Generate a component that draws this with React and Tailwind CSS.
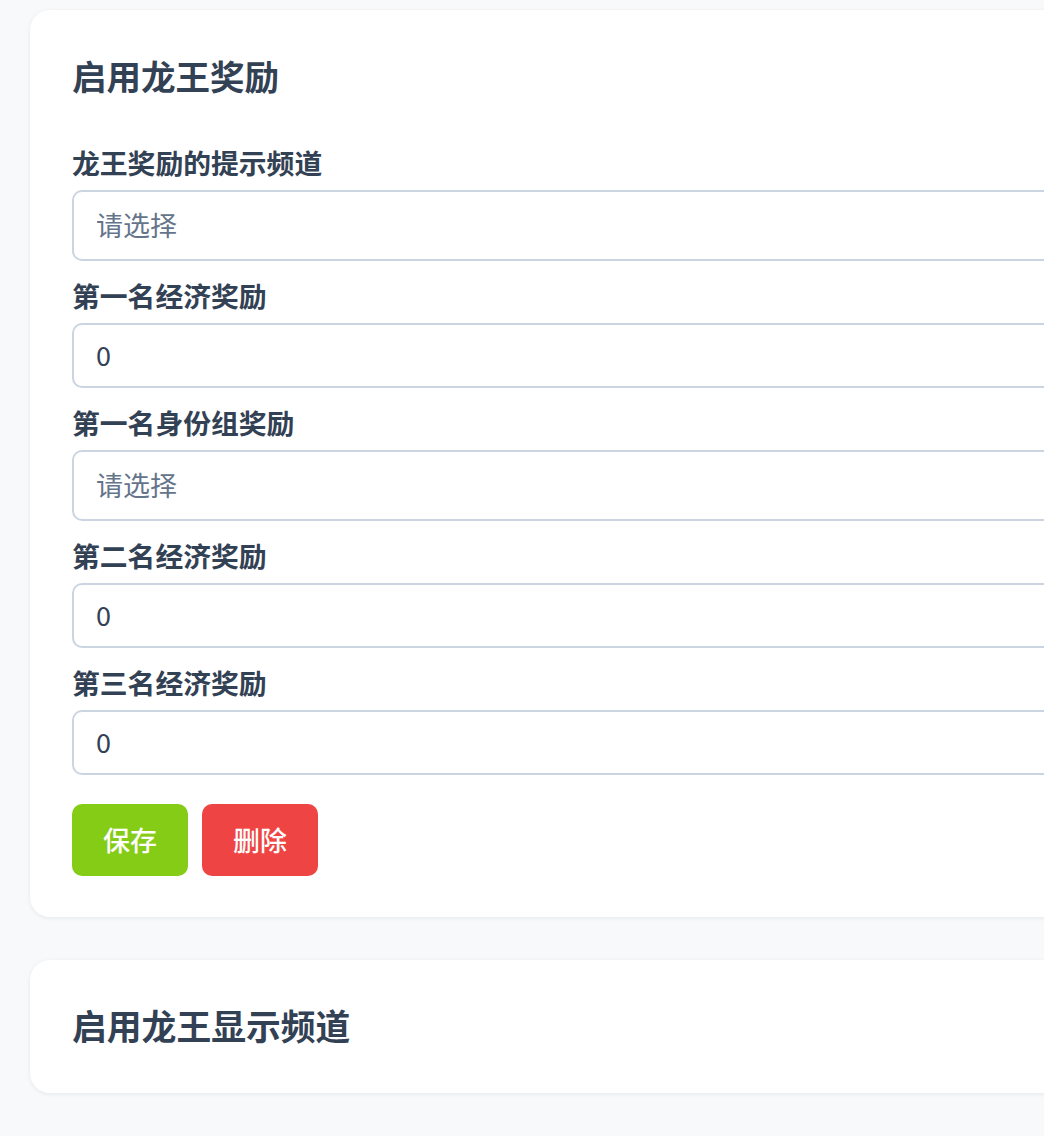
import React from "react";

const font = { fontFamily: '"Noto Sans CJK SC", "Noto Sans", sans-serif' };

function Label({ children }) {
  return (
    <div className="h-[36px] leading-[36px] text-[27.8px] font-semibold text-[#334155] mb-[9.5px] whitespace-nowrap">
      {children}
    </div>
  );
}

function SelectBox() {
  return (
    <div className="h-[71px] rounded-[10px] border-2 border-[#cbd5e1] bg-white flex items-center pl-[22px] text-[27px] text-[#64748b]">
      请选择
    </div>
  );
}

function NumberBox() {
  return (
    <div className="h-[65px] rounded-[10px] border-2 border-[#cbd5e1] bg-white flex items-center pl-[22px] text-[27px] text-[#334155]">
      0
    </div>
  );
}

export default function App() {
  return (
    <div
      className="w-[1044px] h-[1136px] overflow-hidden bg-[#f8f9fb]"
      style={font}
    >
      <div className="w-[1140px] pl-[30px] pt-[10px] flex flex-col gap-[43px]">
        <div className="bg-white rounded-[20px] shadow-[0_1px_4px_rgba(15,23,42,0.08)] px-[42px] pt-[40px] pb-[41px]">
          <h2 className="h-[51px] leading-[51px] text-[34.5px] font-semibold text-[#334155] whitespace-nowrap">
            启用龙王奖励
          </h2>
          <div className="mt-[43px] flex flex-col gap-[16.6px]">
            <div>
              <Label>龙王奖励的提示频道</Label>
              <SelectBox />
            </div>
            <div>
              <Label>第一名经济奖励</Label>
              <NumberBox />
            </div>
            <div>
              <Label>第一名身份组奖励</Label>
              <SelectBox />
            </div>
            <div>
              <Label>第二名经济奖励</Label>
              <NumberBox />
            </div>
            <div>
              <Label>第三名经济奖励</Label>
              <NumberBox />
            </div>
          </div>
          <div className="mt-[29px] flex gap-[14px]">
            <button className="w-[116px] h-[72px] rounded-[10px] bg-[#84cc16] text-white text-[27px] font-medium">
              保存
            </button>
            <button className="w-[116px] h-[72px] rounded-[10px] bg-[#ef4444] text-white text-[27px] font-medium">
              删除
            </button>
          </div>
        </div>
        <div className="bg-white rounded-[20px] shadow-[0_1px_4px_rgba(15,23,42,0.08)] px-[42px] pt-[40px] pb-[42px]">
          <h2 className="h-[51px] leading-[51px] text-[34.8px] font-semibold text-[#334155] whitespace-nowrap">
            启用龙王显示频道
          </h2>
        </div>
      </div>
    </div>
  );
}
